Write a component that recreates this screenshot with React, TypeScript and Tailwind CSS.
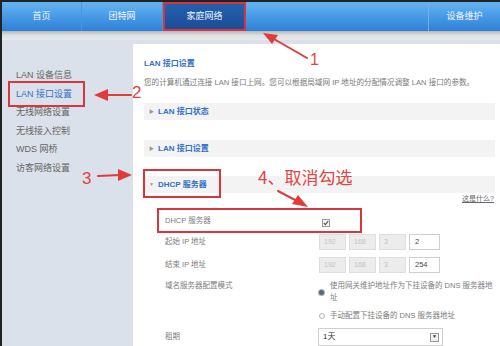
import * as React from "react";

const font = { fontFamily: '"Liberation Sans", "Noto Sans CJK SC", sans-serif' };

function NavItem({ label, className }: { label: string; className: string }) {
  return (
    <div className={`flex h-full items-center justify-center text-[9px] text-[#eef6ff] ${className}`}>
      {label}
    </div>
  );
}

function SideItem({ label, active }: { label: string; active?: boolean }) {
  return (
    <div
      className={`h-[18.6px] text-[9px] leading-[18.6px] ${
        active ? "text-[#3570c8]" : "text-[#666]"
      }`}
    >
      {label}
    </div>
  );
}

function Bar({ label, open, className }: { label: string; open?: boolean; className: string }) {
  return (
    <div className={`flex h-[17px] items-center bg-[#f3f3f3] pl-[5px] ${className}`}>
      <span className="mr-[4px] text-[5px] text-[#999]">{open ? "▼" : "▶"}</span>
      <span className="text-[8px] font-bold text-[#3570c8]">{label}</span>
    </div>
  );
}

function IpInputs({ last }: { last: string }) {
  return (
    <div className="flex gap-[3px]">
      {["192", "168", "3"].map((v, i) => (
        <div
          key={i}
          className="flex h-[16px] w-[27px] items-center border border-[#dedede] bg-[#ececec] pl-[4px] text-[7px] text-[#c2c2c2]"
        >
          {v}
        </div>
      ))}
      <div className="flex h-[16px] w-[31px] items-center border border-[#cfcfcf] bg-white pl-[5px] text-[7.5px] text-[#444]">
        {last}
      </div>
    </div>
  );
}

function Annotations() {
  const red = "#e03c3c";
  return (
    <svg className="pointer-events-none absolute inset-0" width="500" height="346" viewBox="0 0 500 346">
      {/* arrow 1 */}
      <path d="M305 56 L272 37" stroke={red} strokeWidth="2" strokeLinecap="round" />
      <path d="M261 31 L276 33 L270 42 Z" fill={red} />
      {/* arrow 2 */}
      <path d="M129 93 L104 93" stroke={red} strokeWidth="2" strokeLinecap="round" />
      <path d="M92 93 L106 87 L106 99 Z" fill={red} />
      {/* arrow 3 */}
      <path d="M96 174 L118 173" stroke={red} strokeWidth="2" strokeLinecap="round" />
      <path d="M130 173 L116 167 L116 179 Z" fill={red} />
      {/* arrow 4 */}
      <path d="M276 189 L295 199" stroke={red} strokeWidth="2" strokeLinecap="round" />
      <path d="M306 205 L290 202 L296 193 Z" fill={red} />
    </svg>
  );
}

export default function App() {
  return (
    <div
      className="relative h-[346px] w-[500px] overflow-hidden border-l-2 border-t-2 border-[#222] bg-white"
      style={font}
    >
      {/* top nav */}
      <div className="flex h-[29px] bg-gradient-to-b from-[#64b4f2] to-[#2d80d7]">
        <NavItem label="首页" className="w-[80px] border-r border-[#4a95de]" />
        <NavItem label="团特网" className="w-[81px] border-r border-[#4a95de]" />
        <div className="flex h-full w-[83px] items-center justify-center border-2 border-[#d4343c] bg-gradient-to-b from-[#2460ae] to-[#1b4d95] text-[9px] text-[#eef6ff]">
          家庭网络
        </div>
        <div className="flex-1" />
        <NavItem label="设备维护" className="w-[72px] border-l border-[#6fb1ec]" />
      </div>
      <div className="h-[9px] bg-gradient-to-b from-[#b5b7b9] via-[#dfe1e3] to-[#e6e8eb]" />

      <div className="flex h-[306px] bg-[#dae1ea]">
        {/* sidebar */}
        <div className="w-[131px] pl-[14px] pt-[26px]">
          <SideItem label="LAN 设备信息" />
          <SideItem label="LAN 接口设置" active />
          <SideItem label="无线网络设置" />
          <SideItem label="无线接入控制" />
          <SideItem label="WDS 网桥" />
          <SideItem label="访客网络设置" />
        </div>

        {/* content */}
        <div className="mt-[4px] flex-1 bg-white pl-[11px] pr-[5px] pt-[15px]">
          <div className="h-[10px] text-[8px] font-bold leading-[10px] text-[#3570c8]">LAN 接口设置</div>
          <div className="mt-[9px] h-[10px] whitespace-nowrap text-[7.6px] leading-[10px] text-[#7a7a7a]">
            您的计算机通过连接 LAN 接口上网。您可以根据局域网 IP 地址的分配情况调整 LAN 接口的参数。
          </div>
          <Bar label="LAN 接口状态" className="mt-[15px]" />
          <Bar label="LAN 接口设置" className="mt-[20px]" />
          <Bar label="DHCP 服务器" open className="mt-[19px]" />
          <div className="mt-[1px] flex h-[10px] justify-end pr-[1px] text-[7px] leading-[10px] text-[#666]">
            <span className="underline">这是什么?</span>
          </div>

          {/* form */}
          <div className="ml-[21px] mt-[7px] text-[7.5px] text-[#7d7d7d]">
            <div className="flex h-[20px] items-center">
              <div className="w-[154px]">DHCP 服务器</div>
              <div className="ml-[3px] mt-[3px] flex h-[8px] w-[8px] items-center justify-center border border-[#9a9a9a] bg-[#f4f4f4]">
                <svg width="6" height="6" viewBox="0 0 6 6">
                  <path d="M0.8 3 L2.4 4.6 L5.2 1.2" stroke="#555" strokeWidth="1.1" fill="none" />
                </svg>
              </div>
            </div>
            <div className="mt-[3px] flex h-[16px] items-center">
              <div className="w-[154px]">起始 IP 地址</div>
              <IpInputs last="2" />
            </div>
            <div className="mt-[7px] flex h-[16px] items-center">
              <div className="w-[154px]">结束 IP 地址</div>
              <IpInputs last="254" />
            </div>
            <div className="mt-[7px] flex">
              <div className="w-[154px] leading-[12px]">域名服务器配置模式</div>
              <div className="leading-[12px]">
                <div className="flex">
                  <div className="flex h-[24px] w-[11px] items-center">
                    <span className="h-[5px] w-[5px] rounded-full bg-[#5a6a7a] ring-1 ring-[#aab4bf]" />
                  </div>
                  <div className="whitespace-nowrap">
                    使用网关维护地址作为下挂设备的 DNS 服务器地
                    <br />址
                  </div>
                </div>
                <div className="mt-[6px] flex items-center">
                  <span className="mr-[5px] h-[6px] w-[6px] rounded-full border border-[#b5b5b5] bg-white" />
                  <span>手动配置下挂设备的 DNS 服务器地址</span>
                </div>
              </div>
            </div>
            <div className="mt-[6px] flex h-[18px] items-center">
              <div className="w-[153px]">租期</div>
              <div className="flex h-[18px] w-[125px] items-center justify-between border border-[#cfcfcf] bg-white pl-[4px] pr-[3px] text-[8px] text-[#333]">
                <span>1天</span>
                <span className="flex h-[9px] w-[9px] items-center justify-center border border-[#9a9a9a] bg-[#f0f0f0] text-[5px] text-[#333]">
                  ▼
                </span>
              </div>
            </div>
          </div>
        </div>
      </div>

      {/* annotations */}
      <div className="pointer-events-none absolute left-[6px] top-[79px] h-[26px] w-[77px] border-2 border-[#d8353c]" />
      <div className="pointer-events-none absolute left-[141px] top-[167px] h-[29px] w-[78px] border-2 border-[#d8353c]" />
      <div className="pointer-events-none absolute left-[155px] top-[206px] h-[25px] w-[205px] border-2 border-[#d8353c]" />
      <Annotations />
      <div className="absolute left-[308px] top-[50px] text-[16px] leading-[16px] text-[#e04444]">1</div>
      <div className="absolute left-[130px] top-[82px] text-[17px] leading-[17px] text-[#e04444]">2</div>
      <div className="absolute left-[80px] top-[168px] text-[17px] leading-[17px] text-[#e04444]">3</div>
      <div
        className="absolute left-[256px] top-[166px] text-[17px] leading-[18px] text-[#e04444]"
        style={{ fontFamily: '"Noto Sans CJK SC", sans-serif' }}
      >
        4、取消勾选
      </div>
    </div>
  );
}
